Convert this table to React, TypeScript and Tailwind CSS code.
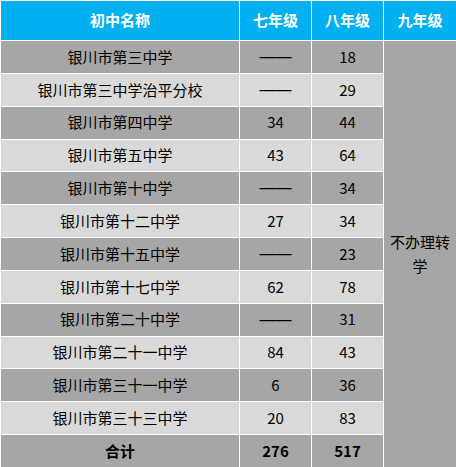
const rows: [string, string, string][] = [
  ["银川市第三中学", "——", "18"],
  ["银川市第三中学治平分校", "——", "29"],
  ["银川市第四中学", "34", "44"],
  ["银川市第五中学", "43", "64"],
  ["银川市第十中学", "——", "34"],
  ["银川市第十二中学", "27", "34"],
  ["银川市第十五中学", "——", "23"],
  ["银川市第十七中学", "62", "78"],
  ["银川市第二十中学", "——", "31"],
  ["银川市第二十一中学", "84", "43"],
  ["银川市第三十一中学", "6", "36"],
  ["银川市第三十三中学", "20", "83"],
];

export default function App() {
  return (
    <div
      className="grid h-[467px] w-[456px] gap-px bg-white pl-px pt-px text-[15px] text-black"
      style={{
        gridTemplateColumns: "238px 71px 71px 72px",
        gridTemplateRows: "39px repeat(13, 1fr)",
        fontFamily: '"Noto Sans CJK SC", "Noto Sans", sans-serif',
      }}
    >
      {["初中名称", "七年级", "八年级", "九年级"].map((h) => (
        <div key={h} className="flex items-center justify-center bg-[#00b0f0] font-bold text-white">
          {h}
        </div>
      ))}

      {rows.map(([name, g7, g8], i) => {
        const bg = i % 2 === 0 ? "bg-[#a6a6a6]" : "bg-[#d9d9d9]";
        return [
          <div key={`n${i}`} className={`flex items-center justify-center ${bg}`}>{name}</div>,
          <div key={`a${i}`} className={`flex items-center justify-center ${bg}`}>
            {g7 === "——" ? (
              <span className="font-['Liberation_Sans',sans-serif] text-[16px]">——</span>
            ) : (
              g7
            )}
          </div>,
          <div key={`b${i}`} className={`flex items-center justify-center ${bg}`}>{g8}</div>,
          i === 0 ? (
            <div
              key="merged"
              className="row-span-13 flex items-center justify-center bg-[#a6a6a6] px-1 text-center leading-[24px]"
            >
              不办理转学
            </div>
          ) : null,
        ];
      })}

      {/* 合计 */}
      <div className="flex items-center justify-center bg-[#a6a6a6] font-bold">合计</div>
      <div className="flex items-center justify-center bg-[#a6a6a6] font-bold">276</div>
      <div className="flex items-center justify-center bg-[#a6a6a6] font-bold">517</div>
    </div>
  );
}
